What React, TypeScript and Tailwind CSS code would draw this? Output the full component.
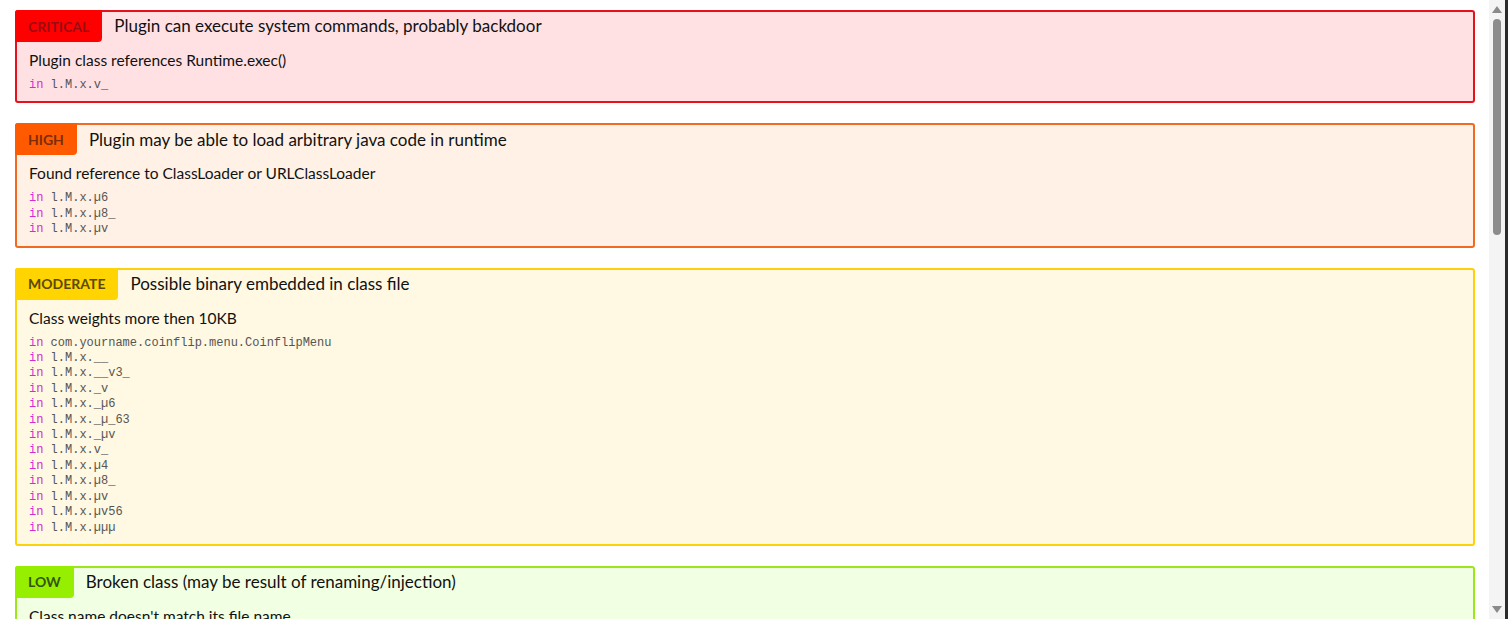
import React from "react";

type Level = "CRITICAL" | "HIGH" | "MODERATE" | "LOW";

type Finding = {
  level: Level;
  title: string;
  detail: string;
  places: string[];
};

const styles: Record<Level, { card: string; badge: string }> = {
  CRITICAL: {
    card: "border-[#e5121c] bg-[#ffe1e4]",
    badge: "bg-[#ff0000] text-[#9c0b12]",
  },
  HIGH: {
    card: "border-[#f06a22] bg-[#fff1e5]",
    badge: "bg-[#ff5a00] text-[#7a2d08]",
  },
  MODERATE: {
    card: "border-[#fbd20c] bg-[#fff8e2]",
    badge: "bg-[#ffd400] text-[#5b4906]",
  },
  LOW: {
    card: "border-[#9ce61e] bg-[#f1ffe3]",
    badge: "bg-[#96ee00] text-[#33570a]",
  },
};

const findings: Finding[] = [
  {
    level: "CRITICAL",
    title: "Plugin can execute system commands, probably backdoor",
    detail: "Plugin class references Runtime.exec()",
    places: ["l.M.x.v_"],
  },
  {
    level: "HIGH",
    title: "Plugin may be able to load arbitrary java code in runtime",
    detail: "Found reference to ClassLoader or URLClassLoader",
    places: ["l.M.x.\u00b56", "l.M.x.\u00b58_", "l.M.x.\u00b5v"],
  },
  {
    level: "MODERATE",
    title: "Possible binary embedded in class file",
    detail: "Class weights more then 10KB",
    places: [
      "com.yourname.coinflip.menu.CoinflipMenu",
      "l.M.x.__",
      "l.M.x.__v3_",
      "l.M.x._v",
      "l.M.x._\u00b56",
      "l.M.x._\u00b5_63",
      "l.M.x._\u00b5v",
      "l.M.x.v_",
      "l.M.x.\u00b54",
      "l.M.x.\u00b58_",
      "l.M.x.\u00b5v",
      "l.M.x.\u00b5v56",
      "l.M.x.\u00b5\u00b5\u00b5",
    ],
  },
  {
    level: "LOW",
    title: "Broken class (may be result of renaming/injection)",
    detail: "Class name doesn't match its file name",
    places: ["l.M.x.__", "l.M.x.__v3_", "l.M.x._v", "l.M.x._\u00b56", "l.M.x.v_", "l.M.x.\u00b54"],
  },
];

function FindingCard({ finding }: { finding: Finding }) {
  const s = styles[finding.level];
  return (
    <div className={`shrink-0 rounded-[3px] border-2 ${s.card}`}>
      <div className="flex items-center gap-3">
        <span
          className={`-ml-[2px] -mt-[2px] flex h-[32px] items-center rounded-tl-[3px] rounded-br-[4px] px-[13px] text-[14px] font-bold ${s.badge}`}
        >
          {finding.level}
        </span>
        <h2 className="-mt-[2px] text-[17px] text-[#111]">{finding.title}</h2>
      </div>
      <div className="px-[12px] pb-[8px] pt-[9px]">
        <p className="text-[15.5px] leading-[19px] text-[#111]">{finding.detail}</p>
        <ul className="mt-[8px] font-['Liberation_Mono',monospace] text-[12px] leading-[15.4px] text-[#555]">
          {finding.places.map((p, i) => (
            <li key={i}>
              <span className="text-[#d42ad4]">in</span> {p}
            </li>
          ))}
        </ul>
      </div>
    </div>
  );
}

// Window scrollbar on the right edge
function Scrollbar() {
  return (
    <div className="flex w-[19px] shrink-0 border-r-[3px] border-[#2b2b2b] bg-[#f4f4f4]">
      <div className="flex w-full flex-col items-center py-[4px]">
        <svg width="10" height="7" viewBox="0 0 10 7" className="mt-[2px]">
          <path d="M5 0L10 7H0Z" fill="#8a8a8a" />
        </svg>
        <div className="mt-[6px] h-[216px] w-[8px] rounded-full bg-[#8c8c8c]" />
        <div className="flex-1" />
        <svg width="10" height="7" viewBox="0 0 10 7" className="mb-[2px]">
          <path d="M0 0H10L5 7Z" fill="#8a8a8a" />
        </svg>
      </div>
    </div>
  );
}

export default function App() {
  return (
    <div className="flex h-screen overflow-hidden bg-white font-['Lato','Noto_Sans',sans-serif]">
      <div className="flex min-w-0 flex-1 flex-col gap-[20px] overflow-hidden pb-[20px] pl-[15px] pr-[14px] pt-[10px]">
        {findings.map((f) => (
          <FindingCard key={f.level} finding={f} />
        ))}
      </div>
      <Scrollbar />
    </div>
  );
}
